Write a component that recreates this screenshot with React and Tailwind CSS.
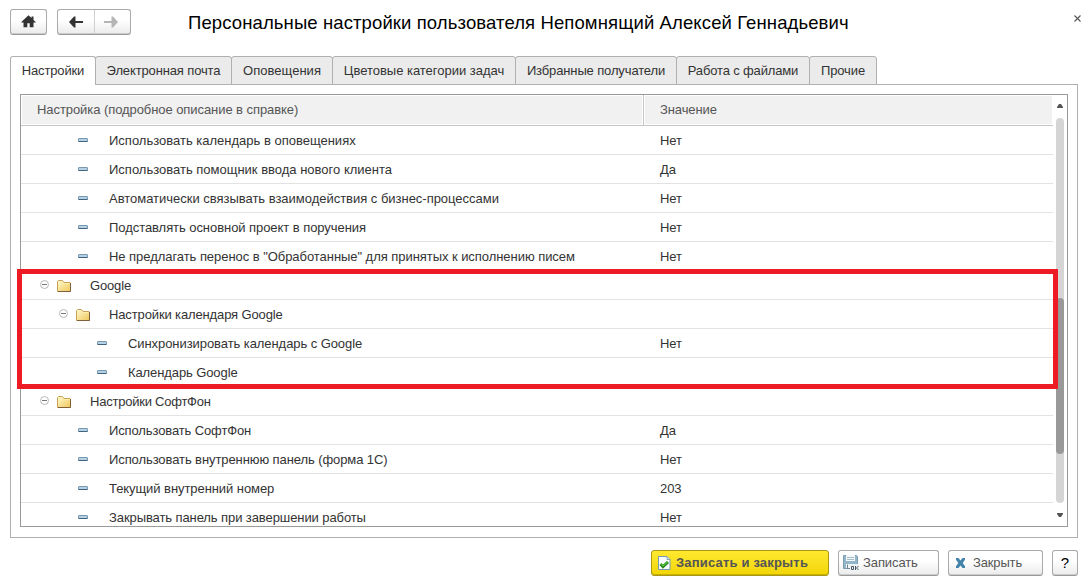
const tabs = [
  ['Настройки', 'w-[86px] tracking-[-0.14px]'],
  ['Электронная почта', 'w-[137px] tracking-[-0.13px]'],
  ['Оповещения', 'w-[102px] tracking-[0.03px]'],
  ['Цветовые категории задач', 'w-[184px] tracking-[-0.02px]'],
  ['Избранные получатели', 'w-[162px] tracking-[-0.13px]'],
  ['Работа с файлами', 'w-[134px] tracking-[-0.15px]'],
  ['Прочие', 'w-[68px] tracking-[-0.1px]'],
];

const rows = [
  { level: 2, label: 'Использовать календарь в оповещениях', value: 'Нет', track: 'tracking-[0px]' },
  { level: 2, label: 'Использовать помощник ввода нового клиента', value: 'Да', track: 'tracking-[0px]' },
  { level: 2, label: 'Автоматически связывать взаимодействия с бизнес-процессами', value: 'Нет', track: 'tracking-[-0.02px]' },
  { level: 2, label: 'Подставлять основной проект в поручения', value: 'Нет', track: 'tracking-[-0.06px]' },
  { level: 2, label: 'Не предлагать перенос в "Обработанные" для принятых к исполнению писем', value: 'Нет', track: 'tracking-[-0.05px]' },
  { level: 1, label: 'Google', folder: true, track: 'tracking-[-0.15px]' },
  { level: 2, label: 'Настройки календаря Google', folder: true, track: 'tracking-[-0.13px]' },
  { level: 3, label: 'Синхронизировать календарь с Google', value: 'Нет', track: 'tracking-[-0.07px]' },
  { level: 3, label: 'Календарь Google', track: 'tracking-[-0.1px]' },
  { level: 1, label: 'Настройки СофтФон', folder: true, track: 'tracking-[-0.23px]' },
  { level: 2, label: 'Использовать СофтФон', value: 'Да', track: 'tracking-[-0.12px]' },
  { level: 2, label: 'Использовать внутреннюю панель (форма 1С)', value: 'Нет', track: 'tracking-[-0.09px]' },
  { level: 2, label: 'Текущий внутренний номер', value: '203', track: 'tracking-[-0.07px]' },
  { level: 2, label: 'Закрывать панель при завершении работы', value: 'Нет', track: 'tracking-[-0.09px]' },
];

const indents = { 1: 'pl-[19px]', 2: 'pl-[38px]', 3: 'pl-[57px]' };

function HomeIcon() {
  return (
    <svg width="15" height="13" viewBox="0 0 15 13" fill="#333">
      <path d="M7.5 0.3 0.300 7v.6H2.500V12.300h3.800V8.300h2.400v4h3.800V7.600h2.200V7L12.500 5V1.500h-2v1.600z" />
    </svg>
  );
}

function Arrow({ right }) {
  return (
    <svg width="14" height="12" viewBox="0 0 14 12" className={right ? 'rotate-180' : ''}>
      <path d="M0 6 5 .5h1.500V5H14v2H6.500v4.500H5z" fill={right ? '#b5b5b5' : '#333'} />
    </svg>
  );
}

function Collapse() {
  return (
    <svg width="9" height="9" viewBox="0 0 9 9" fill="none">
      <circle cx="4.500" cy="4.500" r="4" stroke="#b8b8b8" />
      <path d="M2 4.500h5" stroke="#777" />
    </svg>
  );
}

function Folder() {
  return (
    <svg width="15" height="13" viewBox="0 0 15 13">
      <defs>
        <linearGradient id="folder" x1="0" y1="0" x2="1" y2="1">
          <stop offset="0" stopColor="#fffbd0" />
          <stop offset="1" stopColor="#efc659" />
        </linearGradient>
      </defs>
      <path d="M.5 11.500V1.500l1-1h4l1.500 2h6l.5.5v8.500z" fill="url(#folder)" stroke="#c9a257" />
      <path d="M1 11.500h12.500V3" fill="none" stroke="#80603a" />
      <path d="M7.500 3.500h5" stroke="#fff0a8" />
    </svg>
  );
}

function Dash() {
  return (
    <svg width="10" height="4" viewBox="0 0 10 4">
      <rect x=".5" y=".5" width="9" height="3" rx=".5" fill="#b4d2e4" stroke="#7898b0" />
      <path d="M.5 3.500h9" stroke="#416380" />
    </svg>
  );
}

function DocCheck() {
  return (
    <svg width="13" height="14" viewBox="0 0 13 14">
      <path d="M.5.5h8.500l3 3v10H.5z" fill="#f7fbff" stroke="#7698ad" />
      <path d="M9 .5v3h3" fill="#c9dce8" stroke="#7698ad" strokeWidth=".8" />
      <path d="m2.500 8 2.500 2.700 5-4.700" fill="none" stroke="#23851c" strokeWidth="3" />
      <path d="m3 8 2 2 4.600-4.200" fill="none" stroke="#58c33a" strokeWidth="1.200" />
    </svg>
  );
}

function Disk() {
  return (
    <svg width="16" height="16" viewBox="0 0 16 16">
      <path d="M.5.5h13l1 1v12H.5z" fill="#94b6ca" stroke="#7a9caf" />
      <path d="M3 0h9v6H3z" fill="#f4f8fa" />
      <path d="M4 2.500h7M4 4.500h7" stroke="#a9bdc8" />
      <path d="M3 9h13v7H5v-3H3z" fill="#eef3f6" />
      <path d="M4.500 9.500v4M4 13.500h3" fill="none" stroke="#6d8594" />
      <path d="M8.500 11.500h2v3h-2zM12.500 11v4M15.500 11l-2 2 2 2" fill="none" stroke="#4d565d" />
    </svg>
  );
}

function Cross() {
  return (
    <svg width="11" height="10" viewBox="0 0 11 10">
      <path d="M1 0H3.500l2 2.600 2-2.600H10v1.800L7.700 5l2.300 3.200V10H7.500L5.500 7.400 3.500 10H1V8.200L3.300 5 1 1.800z" fill="#4583aa" />
    </svg>
  );
}

const btn =
  'flex h-[26px] shrink-0 items-center rounded-[3px] border border-[#aaa] border-b-[#999] bg-linear-to-b from-white from-40% to-[#ebebeb] shadow-[inset_0_-1px_0_#ccc]';

export default function App() {
  return (
    <div className="flex h-[578px] w-[1082px] flex-col overflow-hidden bg-white font-['Liberation_Sans',Arial,sans-serif] text-[13px] text-[#333]">
      <header className="flex h-[56px] shrink-0 items-start pt-[9px] pl-[10px]">
        <button className={`${btn} w-[37px] justify-center pb-px`}><HomeIcon /></button>
        <div className={`${btn} ml-[10px] w-[74px]`}>
          <button className="flex h-full w-[37px] items-center justify-center border-r border-[#d0d0d0] pb-px"><Arrow /></button>
          <button className="flex h-full flex-1 items-center justify-center pr-[3px] pb-px"><Arrow right /></button>
        </div>
        <h1 className="ml-[57px] whitespace-nowrap pt-[2px] text-[18.5px] leading-[24px] tracking-[0.11px] text-black">
          Персональные настройки пользователя Непомнящий Алексей Геннадьевич
        </h1>
        <button className="mt-[6px] mr-[1px] ml-auto">
          <svg width="7" height="7" viewBox="0 0 7 7"><path d="m.5.5 6 6m0-6-6 6" stroke="#555" strokeWidth="1.100" /></svg>
        </button>
      </header>

      <nav className="z-10 ml-[10px] flex h-[29px] shrink-0">
        {tabs.map(([label, style], i) => (
          <button
            key={label}
            className={`${style} ${i === 0 ? 'bg-white' : '-ml-px border-b bg-[#ebebeb]'} shrink-0 whitespace-nowrap rounded-t-[3px] border-x border-t border-[#b0b0b0] text-center`}
          >
            {label}
          </button>
        ))}
      </nav>

      <main className="-mt-px ml-[10px] h-[454px] w-[1068px] shrink-0 border border-[#b0b0b0] p-[9px]">
        <div className="relative flex h-[433px] w-[1048px] border border-[#999]">
          <div className="flex w-[1032px] flex-col overflow-hidden">
            <div className="flex h-[31px] shrink-0 border-b border-[#c6c6c6] p-px text-[#555]">
              <div className="flex w-[620px] items-center bg-[#f1f1f1] pl-[15px] tracking-[-0.07px]">Настройка (подробное описание в справке)</div>
              <div className="-my-px mx-px w-px bg-[#c6c6c6]" />
              <div className="flex flex-1 items-center bg-[#f1f1f1] pl-[15px] tracking-[-0.1px]">Значение</div>
            </div>
            {rows.map((row) => (
              <div key={row.label} className="flex h-[29px] shrink-0 items-center border-b border-[#e2e2e2] pt-[2px] whitespace-nowrap">
                <div className={`flex w-[639px] items-center ${indents[row.level]}`}>
                  <span className="flex w-[17px] shrink-0 pb-[4px]">{row.folder && <Collapse />}</span>
                  <span className="flex w-[33px] shrink-0">
                    {row.folder ? <span className="pt-px"><Folder /></span> : <span className="pb-[2px] pl-[2px]"><Dash /></span>}
                  </span>
                  <span className={row.track}>{row.label}</span>
                </div>
                <span className="tracking-[-0.1px]">{row.value}</span>
              </div>
            ))}
          </div>
          <div className="flex w-[14px] flex-col items-center pt-[9px]">
            <svg width="6" height="4" viewBox="0 0 6 4"><path d="M0 4V3l2-3h2l2 3v1z" fill="#555" /></svg>
            <div className="mt-[10px] h-[385px] w-[8px] shrink-0 rounded-full bg-[#d5d5d5] pt-[180px]">
              <div className="h-[156px] rounded-full bg-[#999]" />
            </div>
            <svg className="mt-[10px]" width="6" height="4" viewBox="0 0 6 4"><path d="M0 0h6v1L4 4H2L0 1z" fill="#555" /></svg>
          </div>
          <div className="absolute top-[174px] left-[-4px] h-[120px] w-[1041px] border-5 border-[#ed1c24]" />
        </div>
      </main>

      <footer className="flex h-[40px] shrink-0 items-start gap-[9px] pt-[12px] pl-[651px] whitespace-nowrap text-[#555]">
        <button className="flex h-[26px] w-[178px] shrink-0 items-center rounded-[3px] border border-[#aa9515] bg-linear-to-b from-[#ffe92e] to-[#f2d500] pl-[6px] font-bold shadow-[inset_0_-1px_0_#c6b000]">
          <DocCheck /><span className="ml-[5px] tracking-[0.18px]">Записать и закрыть</span>
        </button>
        <button className={`${btn} w-[101px] pl-[4px]`}><Disk /><span className="ml-[4px] tracking-[-0.1px]">Записать</span></button>
        <button className={`${btn} w-[95px] pl-[6px]`}><Cross /><span className="ml-[7px] tracking-[-0.15px]">Закрыть</span></button>
        <button className={`${btn} w-[26px] justify-center text-[15px] text-black`}>?</button>
      </footer>
    </div>
  );
}
